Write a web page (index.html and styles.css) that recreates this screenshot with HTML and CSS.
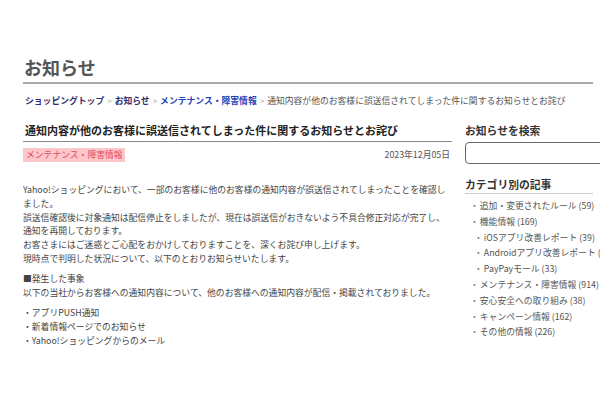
FILE: index.html
```html
<!DOCTYPE html>
<html lang="ja">
<head>
<meta charset="utf-8">
<title>お知らせ</title>
<link rel="stylesheet" href="styles.css">
</head>
<body>
<div class="page">
  <h1 class="page-title">お知らせ</h1>
  <nav class="crumbs">
    <a class="crumb-dark" href="#">ショッピングトップ</a><span class="sep">&gt;</span><a class="crumb-dark" href="#">お知らせ</a><span class="sep">&gt;</span><a class="crumb-blue" href="#">メンテナンス・障害情報</a><span class="sep">&gt;</span><span class="crumb-cur">通知内容が他のお客様に誤送信されてしまった件に関するお知らせとお詫び</span>
  </nav>
  <div class="columns">
    <main class="article">
      <h2 class="article-title">通知内容が他のお客様に誤送信されてしまった件に関するお知らせとお詫び</h2>
      <div class="meta">
        <span class="tag">メンテナンス・障害情報</span>
        <span class="date">2023年12月05日</span>
      </div>
      <div class="body">
        <p>Yahoo!ショッピングにおいて、一部のお客様に他のお客様の通知内容が誤送信されてしまったことを確認しました。<br>誤送信確認後に対象通知は配信停止をしましたが、現在は誤送信がおきないよう不具合修正対応が完了し、通知を再開しております。<br>お客さまにはご迷惑とご心配をおかけしておりますことを、深くお詫び申し上げます。<br>現時点で判明した状況について、以下のとおりお知らせいたします。</p>
        <p>■発生した事象<br>以下の当社からお客様への通知内容について、他のお客様への通知内容が配信・掲載されておりました。</p>
        <p>・アプリPUSH通知<br>・新着情報ページでのお知らせ<br>・Yahoo!ショッピングからのメール<br>・Yahoo!ショッピングアプリ内のお知らせページでのお知らせ表示について</p>
      </div>
    </main>
    <aside class="side">
      <h3 class="side-head">お知らせを検索</h3>
      <input class="search" type="text" aria-label="お知らせを検索">
      <h3 class="side-head ruled">カテゴリ別の記事</h3>
      <ul class="cats">
        <li>追加・変更されたルール (59)</li>
        <li>機能情報 (169)</li>
        <li class="sub">iOSアプリ改善レポート (39)</li>
        <li class="sub">Androidアプリ改善レポート (41)</li>
        <li class="sub">PayPayモール (33)</li>
        <li>メンテナンス・障害情報 (914)</li>
        <li>安心安全への取り組み (38)</li>
        <li>キャンペーン情報 (162)</li>
        <li>その他の情報 (226)</li>
      </ul>
    </aside>
  </div>
</div>
</body>
</html>
```
FILE: styles.css
```css
html, body {
  margin: 0;
  padding: 0;
  background: #fff;
  overflow: hidden;
}
body {
  font-family: "Noto Sans CJK JP", "Noto Sans", sans-serif;
  color: #444;
  width: 600px;
  height: 400px;
}
.page {
  padding: 0 7px 0 23px;
}
.page-title {
  margin: 0;
  padding: 55px 0 3px 1px;
  font-size: 18px;
  line-height: 24px;
  font-weight: bold;
  color: #555;
  border-bottom: 2px solid #aaa;
}
.crumbs {
  margin-top: 10px;
  font-size: 8.8px;
  line-height: 14px;
  white-space: nowrap;
  padding-left: 2px;
}
.crumbs a {
  text-decoration: none;
  font-weight: bold;
}
.crumb-dark { color: #2d2d6e; }
.crumb-blue { color: #1f45b8; }
.sep {
  color: #999;
  margin: 0 3px;
  font-size: 8px;
}
.crumb-cur { color: #555; }
.columns {
  display: flex;
  gap: 13px;
  margin-top: 14px;
}
.article {
  width: 429px;
  flex: none;
}
.article-title {
  margin: 0;
  padding: 0 0 3px 2px;
  font-size: 11px;
  line-height: 16px;
  font-weight: bold;
  color: #222;
  border-bottom: 1.5px solid #888;
}
.meta {
  display: flex;
  justify-content: space-between;
  align-items: center;
  margin-top: 6px;
}
.tag {
  background: #fcc6cb;
  color: #e04a5c;
  font-size: 8.8px;
  line-height: 14px;
  padding: 0 2px 0 3px;
}
.date {
  font-size: 8.8px;
  line-height: 14px;
  color: #555;
  padding-right: 2px;
}
.body {
  margin-top: 21px;
  height: 167px;
  overflow: hidden;
  font-size: 8.8px;
  line-height: 13.8px;
  color: #444;
}
.body p {
  margin: 0 0 6.5px;
}
.side {
  width: 128px;
  flex: none;
}
.side-head {
  margin: 0;
  font-size: 10.8px;
  line-height: 16px;
  font-weight: bold;
  color: #333;
  white-space: nowrap;
}
.search {
  display: block;
  box-sizing: border-box;
  width: 160px;
  height: 22px;
  margin-top: 4px;
  border: 1px solid #666;
  border-radius: 4px;
  background: #fff;
}
.side-head.ruled {
  margin-top: 12px;
  padding-bottom: 1px;
  border-bottom: 1px solid #ccc;
}
.cats {
  list-style: none;
  margin: 4px 0 0;
  padding: 0;
  font-size: 8.8px;
  line-height: 15.8px;
  color: #555;
  white-space: nowrap;
}
.cats li {
  padding-left: 5px;
}
.cats li::before {
  content: "・";
  color: #777;
  margin-right: 1px;
}
.cats li.sub {
  padding-left: 9px;
}
```
